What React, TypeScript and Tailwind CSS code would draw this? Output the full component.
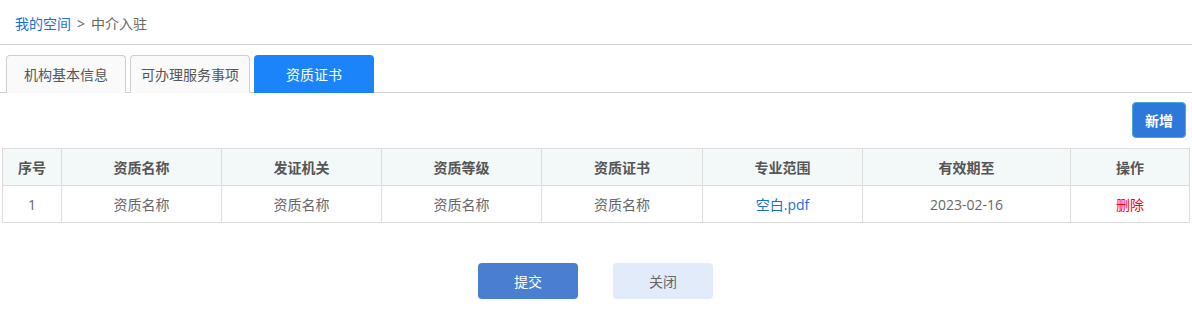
import React from "react";

const cols = [
  { t: "序号", w: 59 },
  { t: "资质名称", w: 160 },
  { t: "发证机关", w: 160 },
  { t: "资质等级", w: 160 },
  { t: "资质证书", w: 161 },
  { t: "专业范围", w: 160 },
  { t: "有效期至", w: 208 },
  { t: "操作", w: 119 },
];

export default function App() {
  return (
    <div
      className="w-[1192px] h-[322px] bg-white text-[14px] text-[#666]"
      style={{ fontFamily: '"Open Sans", "Noto Sans CJK SC", sans-serif' }}
    >
      <div className="h-[45px] border-b border-[#cfcfcf] flex items-center pl-[15px] pt-[2px]">
        <span className="text-[#1a6fd1]">我的空间</span>
        <span className="ml-[6px] text-[#666]">&gt;</span>
        <span className="ml-[6px] text-[#666]">中介入驻</span>
      </div>
      <div className="mt-[10px] flex gap-[4px] pl-[6px] border-b border-[#cfcfcf] h-[38px]">
        <div className="w-[120px] h-[38px] flex items-center justify-center bg-[#fafafa] border border-b-0 border-[#cfcfcf] rounded-t-[4px] text-[#555]">
          机构基本信息
        </div>
        <div className="w-[120px] h-[38px] flex items-center justify-center bg-[#fafafa] border border-b-0 border-[#cfcfcf] rounded-t-[4px] text-[#555]">
          可办理服务事项
        </div>
        <div className="w-[120px] h-[38px] flex items-center justify-center bg-[#1c84fa] rounded-t-[4px] text-white">
          资质证书
        </div>
      </div>
      <div className="flex justify-end pr-[6px] mt-[9px]">
        <div className="w-[54px] h-[36px] flex items-center justify-center bg-[#2f78db] border border-[#4aa8e0] rounded-[4px] text-white font-bold">
          新增
        </div>
      </div>
      <div className="mt-[10px] pl-[2px]">
        <table className="border-collapse table-fixed w-[1188px]">
          <colgroup>
            {cols.map((c) => (
              <col key={c.t} style={{ width: c.w }} />
            ))}
          </colgroup>
          <thead>
            <tr className="h-[37px] bg-[#f3f8f8]">
              {cols.map((c) => (
                <th key={c.t} className="border border-[#dcdcdc] font-bold text-[#555] text-center p-0">
                  {c.t}
                </th>
              ))}
            </tr>
          </thead>
          <tbody>
            <tr className="h-[37px]">
              <td className="border border-[#dcdcdc] text-center p-0">1</td>
              <td className="border border-[#dcdcdc] text-center p-0">资质名称</td>
              <td className="border border-[#dcdcdc] text-center p-0">资质名称</td>
              <td className="border border-[#dcdcdc] text-center p-0">资质名称</td>
              <td className="border border-[#dcdcdc] text-center p-0">资质名称</td>
              <td className="border border-[#dcdcdc] text-center p-0 text-[#1a6fd1]">空白.pdf</td>
              <td className="border border-[#dcdcdc] text-center p-0">2023-02-16</td>
              <td className="border border-[#dcdcdc] text-center p-0 text-[#ff0000]">删除</td>
            </tr>
          </tbody>
        </table>
      </div>
      <div className="mt-[40px] flex justify-center gap-[35px] pr-[1px]">
        <div className="w-[100px] h-[36px] flex items-center justify-center bg-[#4a7fcf] rounded-[4px] text-white">
          提交
        </div>
        <div className="w-[100px] h-[36px] flex items-center justify-center bg-[#e2ebf9] rounded-[4px] text-[#666]">
          关闭
        </div>
      </div>
    </div>
  );
}
